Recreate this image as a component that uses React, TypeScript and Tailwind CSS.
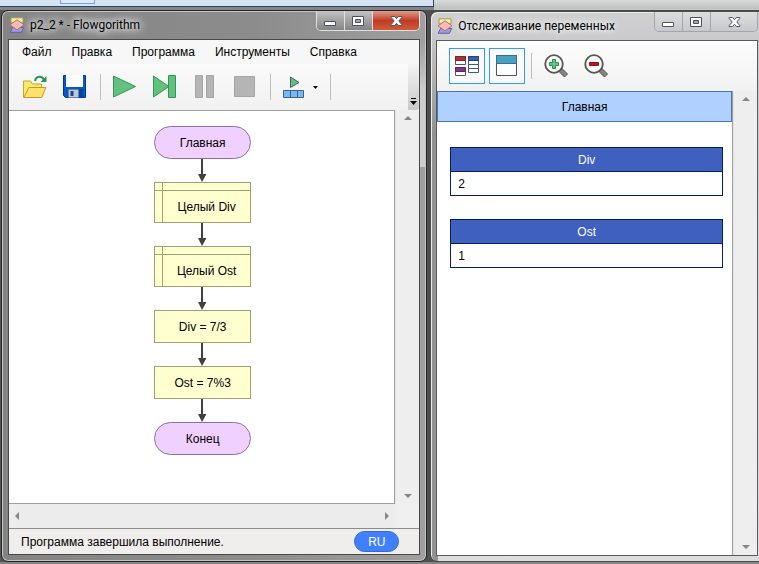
import type { ReactNode } from "react";

const sans = "font-['Liberation_Sans',Arial,sans-serif]";

function AppIcon() {
  return (
    <svg width="16" height="16" viewBox="0 0 16 16" className="shrink-0" aria-hidden="true">
      <path d="M2 .8h12v5H2z" fill="#f8ee9c" stroke="#a39a55" />
      <path d="M3.5 10.5h11.2l-2.4 4.8H1.2z" fill="#9c9ce8" stroke="#5f5f9c" />
      <path d="M8 2.8l7 5-7 5-7-5z" fill="#ffb9b4" stroke="#a87370" />
    </svg>
  );
}

function CaptionGlyph({ kind }: { kind: "min" | "max" | "close" }) {
  if (kind === "min")
    return (
      <svg width="13" height="12" viewBox="0 0 13 12" aria-hidden="true">
        <path d="M.5 6.500h11v4H.5z" fill="#fff" stroke="#4d5262" />
      </svg>
    );
  if (kind === "max")
    return (
      <svg width="13" height="12" viewBox="0 0 13 12" aria-hidden="true">
        <path d="M.5 1.500h11v9H.5z" fill="#fff" stroke="#4d5262" />
        <path d="M3.500 4.500h5v3h-5z" fill="#a5a5a5" stroke="#4d5262" />
      </svg>
    );
  return (
    <svg width="13" height="12" viewBox="0 0 13 12" aria-hidden="true">
      <path
        d="M1.2 1.5h3.4l1.900 2.200 1.900-2.200h3.400v1L8.800 6l3 3.500v1H8.400L6.500 8.300l-1.900 2.200H1.200v-1l3-3.500-3-3.500z"
        fill="#fff"
        stroke="#4d5262"
      />
    </svg>
  );
}

function CaptionButtons({ active }: { active: boolean }) {
  const plain = active
    ? "bg-linear-to-b from-[#c4c4c4] via-[#a2a2a2] via-50% to-[#858585]"
    : "bg-linear-to-b from-[#dedede] to-[#c6c8ce]";
  const close = active
    ? "bg-linear-to-b from-[#dc9b8d] via-[#c03a22] via-50% to-[#cf5a38]"
    : plain;
  const edge = active ? "border-[#e0e0e0]" : "border-[#a2a5a9]";
  return (
    <div className={`flex h-5 shrink-0 overflow-hidden rounded-b-[5px] border border-t-0 ${edge}`}>
      <button aria-label="Свернуть" className={`flex w-7 items-center justify-center border-r ${edge} ${plain}`}>
        <CaptionGlyph kind="min" />
      </button>
      <button aria-label="Развернуть" className={`flex w-7 items-center justify-center border-r ${edge} ${plain}`}>
        <CaptionGlyph kind="max" />
      </button>
      <button aria-label="Закрыть" className={`flex w-[46px] items-center justify-center ${close}`}>
        <CaptionGlyph kind="close" />
      </button>
    </div>
  );
}

function ToolButton({ label, children, wide }: { label: string; children: ReactNode; wide?: boolean }) {
  return (
    <button
      aria-label={label}
      title={label}
      className={`flex h-9 shrink-0 items-center justify-center ${wide ? "w-[50px] gap-2" : "w-10"}`}
    >
      {children}
    </button>
  );
}

function Separator() {
  return (
    <div className="flex w-[10px] shrink-0 justify-center">
      <div className="h-[26px] w-px bg-[#bdbdbd]" />
    </div>
  );
}

function Arrow({ dir }: { dir: "up" | "down" | "left" | "right" }) {
  const paths = { up: "M0 6L4 2l4 4z", down: "M0 2l4 4 4-4z", left: "M6 0L2 4l4 4z", right: "M2 0l4 4-4 4z" };
  return (
    <svg width="8" height="8" viewBox="0 0 8 8" aria-hidden="true">
      <path d={paths[dir]} fill="#868686" />
    </svg>
  );
}

function VerticalScroll() {
  return (
    <div className="flex w-6 shrink-0 flex-col items-center justify-between border-l border-[#e3e3e3] bg-[#eeeeee] py-1">
      <button aria-label="Вверх"><Arrow dir="up" /></button>
      <button aria-label="Вниз"><Arrow dir="down" /></button>
    </div>
  );
}

function Connector() {
  return (
    <svg width="9" height="23" viewBox="0 0 9 23" aria-hidden="true">
      <path d="M3 0h2v15h3.500L4 23 0 15h3z" fill="#404040" />
    </svg>
  );
}

function Terminal({ children }: { children: ReactNode }) {
  return (
    <div className="flex h-[33px] w-[97px] items-center justify-center rounded-full border border-[#8c70a0] bg-[#f0d0ff]">
      {children}
    </div>
  );
}

function Assign({ children }: { children: ReactNode }) {
  return (
    <div className="flex h-[33px] w-[97px] items-center justify-center border border-[#a0a070] bg-[#ffffd0]">
      {children}
    </div>
  );
}

function Declare({ children }: { children: ReactNode }) {
  return (
    <div className="grid h-[41px] w-[97px] grid-cols-[8px_1fr] grid-rows-[8px_1fr] border border-[#a0a070] bg-[#ffffd0]">
      <div className="border-r border-b border-[#a0a070]" />
      <div className="border-b border-[#a0a070]" />
      <div className="border-r border-[#a0a070]" />
      <div className="flex items-center justify-center">{children}</div>
    </div>
  );
}

function Magnifier({ plus }: { plus: boolean }) {
  return (
    <svg width="24" height="24" viewBox="0 0 24 24" aria-hidden="true">
      <path d="M14.500 17l3-3 6 6-3 3z" fill="#858585" stroke="#505050" />
      <circle cx="10" cy="10" r="8.800" fill="#fafafa" stroke="#555" strokeWidth="1.800" />
      {plus ? (
        <path d="M8.500 5.500h3v3h3v3h-3v3h-3v-3h-3v-3h3z" fill="#62c584" stroke="#258c4a" />
      ) : (
        <path d="M5.500 8.500h9v3h-9z" fill="#c40d20" stroke="#8d1420" />
      )}
    </svg>
  );
}

function Variable({ name, value }: { name: string; value: string }) {
  return (
    <table className="w-full border-collapse border border-[#002060] bg-white">
      <thead>
        <tr className="h-6">
          <th scope="col" className="border border-[#002060] bg-[#4060c0] p-0 font-normal text-white">{name}</th>
        </tr>
      </thead>
      <tbody>
        <tr className="h-6">
          <td className="border border-[#002060] px-[7px] py-0">{value}</td>
        </tr>
      </tbody>
    </table>
  );
}

function MainWindow() {
  const menu = ["Файл", "Правка", "Программа", "Инструменты", "Справка"];
  return (
    <section className="flex min-w-0 flex-[426_1_0] flex-col rounded-[7px] border border-[#252525] shadow-[inset_0_0_0_1px_#c5c5c5] [background:linear-gradient(to_bottom,transparent_30px,#cdcdd0_80px,#cdcdd0_156px,transparent_156px)_right/8px_100%_no-repeat,linear-gradient(to_right,#848484,#8c8c8c_60%,#a0a0a0)]">
      <header className="flex h-7 shrink-0 items-start justify-between pr-[6px] pl-[7px]">
        <div className="flex items-center gap-[5px] pt-[6px]">
          <AppIcon />
          <h1 className="font-[Roboto,'Open_Sans',sans-serif] text-[12px] leading-4 [text-shadow:0_0_6px_#fff,0_0_10px_#fff,0_0_14px_#ddd]">
            p2_2 * - Flowgorithm
          </h1>
        </div>
        <CaptionButtons active />
      </header>
      <div className="mx-[6px] mb-[6px] flex min-h-0 flex-1 flex-col border border-[#484848] bg-[#f0f0f0]">
        <nav className="flex h-6 shrink-0 items-center gap-5 bg-[#f7f7f7] pl-[13px]">
          {menu.map((m) => (
            <button key={m}>{m}</button>
          ))}
        </nav>
        <div className="flex h-[46px] shrink-0 items-center justify-between bg-linear-to-b from-[#fafafa] to-[#f1f1f1] pl-[6px]">
          <div className="flex items-center">
            <ToolButton label="Открыть">
              <svg width="24" height="24" viewBox="0 0 24 24" aria-hidden="true">
                <path d="M.5 22V6h7l2 3h9v13z" fill="#f4ea6c" stroke="#bfa63a" />
                <path d="M.8 22.500l5-10h17l-4 10z" fill="#ffe16b" stroke="#c79a28" />
                <path d="M12 6c1-5.500 7.500-5.500 9-1" fill="none" stroke="#2d9150" strokeWidth="2" />
                <path d="M23.500 1v6h-6z" fill="#2d9150" />
              </svg>
            </ToolButton>
            <ToolButton label="Сохранить">
              <svg width="24" height="24" viewBox="0 0 24 24" aria-hidden="true">
                <path d="M.5.500h22v22h-20l-2-2z" fill="#0a59c2" stroke="#003a8c" />
                <path d="M3 0h17v12H3z" fill="#fff" />
                <path d="M5 14h15v8.500H5z" fill="#00459f" />
                <path d="M5.500 14.500h10v8h-10z" fill="#c8c8c8" />
                <path d="M7.500 16h3v5h-3z" fill="#14489b" />
              </svg>
            </ToolButton>
            <Separator />
            <ToolButton label="Запуск">
              <svg width="24" height="24" viewBox="0 0 24 24" aria-hidden="true">
                <path d="M.5 1l22 10.500-22 10.500z" fill="#62c080" stroke="#309a50" />
              </svg>
            </ToolButton>
            <ToolButton label="Шаг">
              <svg width="24" height="24" viewBox="0 0 24 24" aria-hidden="true">
                <path d="M.5 1L16 11.500.5 22z" fill="#62c080" stroke="#309a50" />
                <path d="M15.500.500h7v22h-7z" fill="#62c080" stroke="#309a50" />
              </svg>
            </ToolButton>
            <ToolButton label="Пауза">
              <svg width="24" height="24" viewBox="0 0 24 24" aria-hidden="true">
                <path d="M2.500.500h7v22h-7zM13.500.500h7v22h-7z" fill="#b5b5b5" stroke="#a5a5a5" />
              </svg>
            </ToolButton>
            <ToolButton label="Стоп">
              <svg width="24" height="24" viewBox="0 0 24 24" aria-hidden="true">
                <path d="M1.500 1.500h20v20h-20z" fill="#b5b5b5" stroke="#a5a5a5" />
              </svg>
            </ToolButton>
            <Separator />
            <ToolButton label="Скорость" wide>
              <svg width="22" height="22" viewBox="0 0 22 22" aria-hidden="true">
                <path d="M7.500 1v10.500l8.500-5z" fill="#62c080" stroke="#49645a" />
                <path d="M.5 14.500h20v7H.5z" fill="#74b9fa" stroke="#45617c" />
                <path d="M7.500 14.500v7M14.500 14.500v7" stroke="#45617c" />
              </svg>
              <svg width="5" height="3" viewBox="0 0 5 3" aria-hidden="true">
                <path d="M0 0h5L2.500 3z" fill="#000" />
              </svg>
            </ToolButton>
            <Separator />
          </div>
          <button
            aria-label="Параметры панели"
            className="flex h-full w-[11px] items-end justify-center rounded-br-[3px] bg-linear-to-b from-[#f4f4f4] to-[#c9c9c9] pb-1"
          >
            <svg width="7" height="8" viewBox="0 0 7 8" aria-hidden="true">
              <path d="M1 0h5v1H1zM0 3h7L3.500 7z" fill="#000" />
            </svg>
          </button>
        </div>
        <div className="flex min-h-0 flex-1">
          <main className="flex min-w-0 flex-1 flex-col items-center border-t border-r border-b border-[#a0a0a0] bg-white pt-[15px] pl-[2px]">
            <Terminal>Главная</Terminal>
            <Connector />
            <Declare>Целый Div</Declare>
            <Connector />
            <Declare>Целый Ost</Declare>
            <Connector />
            <Assign>Div = 7/3</Assign>
            <Connector />
            <Assign>Ost = 7%3</Assign>
            <Connector />
            <Terminal>Конец</Terminal>
          </main>
          <VerticalScroll />
        </div>
        <div className="mr-6 flex h-6 shrink-0 items-center justify-between bg-[#ececec] px-1">
          <button aria-label="Влево"><Arrow dir="left" /></button>
          <button aria-label="Вправо"><Arrow dir="right" /></button>
        </div>
        <footer className="flex h-[26px] shrink-0 items-center justify-between border-t border-[#8c8c8c] bg-[#f0eded] pr-5 pl-3">
          <span>Программа завершила выполнение.</span>
          <button className="h-[21px] w-[45px] rounded-full border border-[#3568c8] bg-[#4080ff] text-white">RU</button>
        </footer>
      </div>
    </section>
  );
}

function WatchWindow() {
  return (
    <section className="mt-px flex min-w-0 flex-[329_1_0] flex-col rounded-l-[7px] border border-r-0 border-[#4a4a4a] shadow-[inset_1px_1px_0_0_#eeeeee] [background:linear-gradient(to_bottom,transparent_20px,#929292_120px)_left/7px_100%_no-repeat,linear-gradient(to_bottom,#d0d0d0,#cacace_30px,#e0dde0)]">
      <header className="flex h-7 shrink-0 items-start justify-between pr-px pl-[6px]">
        <div className="flex items-center gap-[5px] pt-[6px]">
          <AppIcon />
          <h2 className="font-[Roboto,'Open_Sans',sans-serif] text-[12px] leading-4 whitespace-nowrap [text-shadow:0_0_6px_#fff,0_0_10px_#fff]">
            Отслеживание переменных
          </h2>
        </div>
        <CaptionButtons active={false} />
      </header>
      <div className="mr-px mb-[5px] ml-[5px] flex min-h-0 flex-1 flex-col border border-[#5a5a5a] bg-[#f0f0f0]">
        <div className="flex h-[50px] shrink-0 items-center bg-linear-to-b from-[#fdfdfd] to-[#f1f1f1] pl-3">
          <button aria-label="Переменные" className="mr-1 flex size-9 items-center justify-center border border-[#3399ff] bg-[#fafafa]">
            <svg width="24" height="22" viewBox="0 0 24 22" aria-hidden="true">
              <path d="M.5 1.500h10v8H.5z" fill="#fff" stroke="#555" />
              <path d="M.5 1.500h10v4H.5z" fill="#a83236" stroke="#7e2226" />
              <path d="M.5 12.500h10v8H.5z" fill="#fff" stroke="#555" />
              <path d="M.5 12.500h10v4H.5z" fill="#823488" stroke="#5e2464" />
              <path d="M13.500 1.500h10v16h-10z" fill="#fff" stroke="#38588e" />
              <path d="M13.500 1.500h10v4h-10z" fill="#3560aa" stroke="#24457e" />
              <path d="M13 9.500h11M13 13.500h11" stroke="#38588e" />
            </svg>
          </button>
          <button aria-label="Окно" className="mr-px flex size-9 items-center justify-center border border-[#3399ff] bg-[#fafafa]">
            <svg width="22" height="22" viewBox="0 0 22 22" aria-hidden="true">
              <path d="M.5.500h20v20H.5z" fill="#fff" stroke="#555" />
              <path d="M.5.500h20v8H.5z" fill="#4ba0c0" stroke="#31738b" />
            </svg>
          </button>
          <Separator />
          <ToolButton label="Увеличить"><Magnifier plus /></ToolButton>
          <ToolButton label="Уменьшить"><Magnifier plus={false} /></ToolButton>
        </div>
        <div className="flex min-h-0 flex-1">
          <main className="flex min-w-0 flex-1 flex-col border-r border-[#a0a0a0] bg-white">
            <h3 className="flex h-[31px] shrink-0 items-center justify-center border border-[#4c73ad] bg-[#b0d0ff]">
              Главная
            </h3>
            <div className="flex flex-col gap-[23px] pt-[25px] pr-[9px] pl-[13px]">
              <Variable name="Div" value="2" />
              <Variable name="Ost" value="1" />
            </div>
          </main>
          <VerticalScroll />
        </div>
      </div>
    </section>
  );
}

export default function App() {
  return (
    <div className={`${sans} flex h-screen min-h-[480px] flex-col bg-[#858585] text-[12px] leading-4 text-black`}>
      <div className="flex h-[7px] shrink-0">
        <div className="flex flex-[434_1_0] border-r border-b border-[#27466e] bg-[#d5e3f2]">
          <div className="ml-[60px] h-1 w-[35px] border border-t-0 border-[#76a5db] bg-[#dce9f7]" />
        </div>
        <div className="flex-[325_1_0] bg-linear-to-b from-[#dadcdc] to-[#c3c5c5]" />
      </div>
      <div className="flex h-[3px] shrink-0">
        <div className="flex-[434_1_0] bg-[#858585]" />
        <div className="flex-[325_1_0] bg-[#c3c5c5]" />
      </div>
      <div className="flex min-h-0 flex-1 gap-[3px] border-b-2 border-[#858585] bg-linear-to-r from-[#555] to-[#484c4b] pl-px">
        <MainWindow />
        <WatchWindow />
      </div>
    </div>
  );
}
